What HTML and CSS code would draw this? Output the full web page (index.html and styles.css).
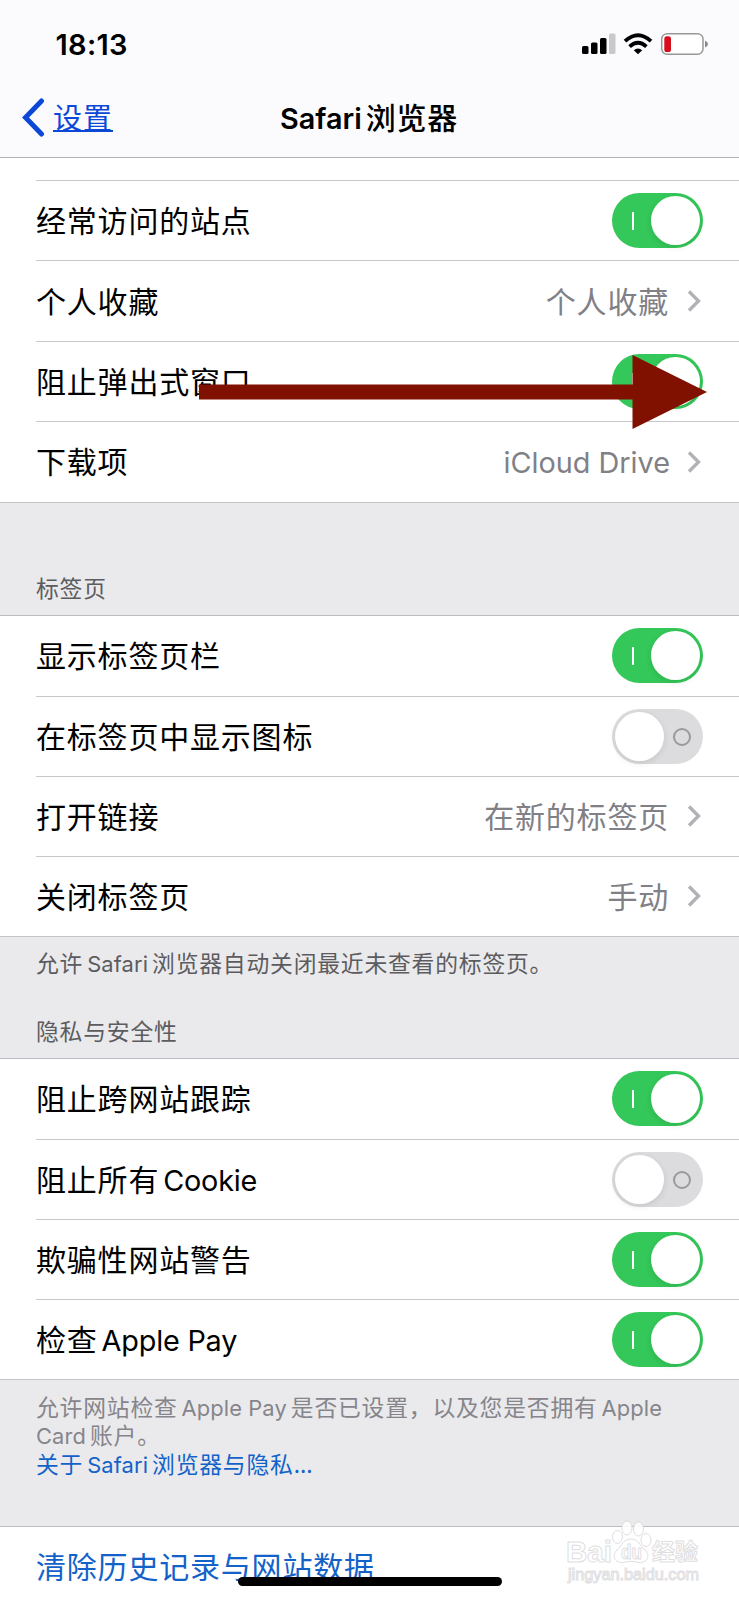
FILE: index.html
```html
<!DOCTYPE html>
<html lang="zh-CN">
<head>
    <meta charset="UTF-8">
    <meta name="viewport" content="width=device-width, initial-scale=1.0">
    <title>Safari浏览器</title>
    <link rel="stylesheet" href="styles.css">
</head>
<body>
    <div class="screen">
        <!-- Header -->
        <header class="header">
            <div class="status-bar">
                <span class="time">18:13</span>
                <svg class="status-icons" width="128" height="24" viewBox="0 0 128 24">
                    <rect x="1" y="14" width="6.5" height="8" rx="1.5"/>
                    <rect x="10" y="10.5" width="6.5" height="11.5" rx="1.5"/>
                    <rect x="19" y="6" width="6.5" height="16" rx="1.5"/>
                    <rect x="28" y="1.5" width="6.5" height="20.5" rx="1.5" fill="#c9c9cb"/>
                    <g fill="none" stroke="#000" stroke-width="3.8">
                        <path d="M44 9.2 Q57 -2.8 70 9.2"/>
                        <path d="M48.6 14.6 Q57 7 65.4 14.6"/>
                    </g>
                    <path d="M52.8 18.3 Q57 14.9 61.2 18.3 L57 22.3 Z"/>
                    <rect x="80.7" y="1.7" width="41.3" height="20.6" rx="5.5" fill="#fff" stroke="#98989a" stroke-width="1.5"/>
                    <rect x="83.3" y="4.3" width="6.7" height="15.7" rx="2.6" fill="#d70f1c"/>
                    <path d="M124 8.5 Q127 10 127 12 Q127 14 124 15.5 Z" fill="#88888a"/>
                </svg>
            </div>
            <nav class="navbar">
                <a class="back" href="#">
                    <svg width="24" height="40" viewBox="0 0 24 40"><path d="M20.5 3 L4.5 19.5 L20.5 36" fill="none" stroke="#0b48d8" stroke-width="5" stroke-linecap="round" stroke-linejoin="miter"/></svg>
                    <span>设置</span>
                </a>
                <h1 class="title"><span class="en">Safari</span>浏览器</h1>
            </nav>
        </header>

        <!-- General -->
        <ul class="list list-first">
            <li class="row"><span>经常访问的站点</span><i class="toggle on"></i></li>
            <li class="row"><span>个人收藏</span><span class="value">个人收藏<svg class="chevron" viewBox="0 0 14 24"><path d="M2 2.5 L11.5 12 L2 21.5"/></svg></span></li>
            <li class="row">
                <span>阻止弹出式窗口</span><i class="toggle on"></i>
                <svg class="arrow" width="508" height="76" viewBox="0 0 508 76"><path d="M0 30.5 H433.5 V1 L508 38 L433.5 75 V45.5 H0 Z" fill="#801000"/></svg>
            </li>
            <li class="row"><span>下载项</span><span class="value"><span class="en drive">iCloud Drive</span><svg class="chevron" viewBox="0 0 14 24"><path d="M2 2.5 L11.5 12 L2 21.5"/></svg></span></li>
        </ul>

        <!-- Tabs -->
        <h2 class="label label-tabs">标签页</h2>
        <ul class="list list-tabs">
            <li class="row"><span>显示标签页栏</span><i class="toggle on"></i></li>
            <li class="row"><span>在标签页中显示图标</span><i class="toggle"></i></li>
            <li class="row"><span>打开链接</span><span class="value">在新的标签页<svg class="chevron" viewBox="0 0 14 24"><path d="M2 2.5 L11.5 12 L2 21.5"/></svg></span></li>
            <li class="row"><span>关闭标签页</span><span class="value">手动<svg class="chevron" viewBox="0 0 14 24"><path d="M2 2.5 L11.5 12 L2 21.5"/></svg></span></li>
        </ul>

        <!-- Privacy -->
        <div class="label label-privacy">
            <p>允许<span class="en">Safari</span>浏览器自动关闭最近未查看的标签页。</p>
            <h2>隐私与安全性</h2>
        </div>
        <ul class="list list-privacy">
            <li class="row"><span>阻止跨网站跟踪</span><i class="toggle on"></i></li>
            <li class="row"><span>阻止所有<span class="en">Cookie</span></span><i class="toggle"></i></li>
            <li class="row"><span>欺骗性网站警告</span><i class="toggle on"></i></li>
            <li class="row"><span>检查<span class="en">Apple Pay</span></span><i class="toggle on"></i></li>
        </ul>
        <div class="note">
            <p>允许网站检查<span class="en">Apple Pay</span>是否已设置，以及您是否拥有<span class="en">Apple</span></p>
            <p><span class="en first">Card</span>账户。</p>
            <p><a href="#">关于<span class="en">Safari</span>浏览器与隐私<span class="dots">...</span></a></p>
        </div>

        <ul class="list list-last">
            <li class="row"><a href="#">清除历史记录与网站数据</a></li>
        </ul>

        <div class="home-indicator"></div>

        <!-- Watermark -->
        <svg class="watermark" width="140" height="70" viewBox="0 0 140 70">
            <g fill="#fff" stroke="#dcdcde" stroke-width="1">
                <text x="5" y="43" class="wm-logo" textLength="46" lengthAdjust="spacingAndGlyphs">Bai</text>
                <ellipse cx="56.5" cy="18" rx="5" ry="6.5"/>
                <ellipse cx="66" cy="9" rx="5" ry="7"/>
                <ellipse cx="77.5" cy="10" rx="5" ry="7"/>
                <ellipse cx="85" cy="21" rx="5" ry="6.5"/>
                <path d="M70 20 C62 20 61 27 56 31 C50 37 54 44 62 43.5 C67 42 73 42 78 43.5 C86 44 90 37 84 31 C79 27 78 20 70 20 Z"/>
                <text x="60" y="40" class="wm-du" textLength="21" lengthAdjust="spacingAndGlyphs">du</text>
                <text x="91" y="41" class="wm-cn">经验</text>
                <text x="7" y="61" class="wm-url" textLength="131" lengthAdjust="spacingAndGlyphs">jingyan.baidu.com</text>
            </g>
        </svg>
    </div>
</body>
</html>
```
FILE: styles.css
```css
*, *::before, *::after {
    box-sizing: border-box;
}
body {
    font-family: "Noto Sans CJK SC", sans-serif;
    margin: 0;
    padding: 0;
    background-color: #eaeaec;
    color: #000;
}
h1, h2, p, ul {
    margin: 0;
    padding: 0;
    font-weight: 400;
}
a {
    color: #1262c9;
    text-decoration: none;
}
.screen {
    position: relative;
    height: 1600px;
    overflow: hidden;
}
.en {
    font-family: Inter, sans-serif;
    font-size: 0.96em;
    line-height: 0;
    letter-spacing: -0.2px;
    margin: 0 4px;
}

/* Header */
.header {
    height: 158px;
    background-color: #fbfbfd;
    border-bottom: 1px solid #b0b0b3;
}
.status-bar {
    display: flex;
    justify-content: space-between;
    align-items: center;
    height: 88px;
    padding: 0 30px 0 55.5px;
}
.time {
    font-family: Inter, sans-serif;
    font-size: 29px;
    font-weight: 600;
    letter-spacing: 0.3px;
}
.navbar {
    display: grid;
    grid-template-columns: 259px auto;
    justify-content: start;
    align-items: center;
    height: 60px;
    padding-left: 21px;
}
.back {
    display: flex;
    align-items: center;
    gap: 8px;
    color: #0b48d8;
    font-size: 29px;
    letter-spacing: 1px;
}
.back span {
    margin-top: -4px;
    text-decoration: underline;
    text-decoration-thickness: 2px;
    text-underline-offset: 1px;
}
.title {
    margin-top: -5px;
    font-size: 30px;
    font-weight: 500;
    letter-spacing: 0.8px;
}
.title .en {
    font-weight: 600;
    letter-spacing: 0;
    margin-left: 0;
}

/* Lists */
.list {
    list-style: none;
    background-color: #fff;
    border-top: 1px solid #bcbcc0;
    border-bottom: 1px solid #c4c4c8;
    padding-left: 36px;
}
.list-first {
    border-top: 0;
    padding-top: 22px;
}
.list-first .row:first-child {
    border-top: 1px solid #c8c8ca;
}
.row {
    position: relative;
    display: flex;
    justify-content: space-between;
    align-items: center;
    height: 80.4px;
    padding-right: 36px;
    border-top: 1px solid #c8c8ca;
    font-size: 30px;
    letter-spacing: 0.8px;
}
.row > span, .row > a {
    margin-top: -3px;
}
.row:first-child {
    border-top: 0;
}
.list-tabs .row, .list-privacy .row {
    height: 80px;
}
.value {
    display: flex;
    align-items: center;
    color: #808086;
}
.drive {
    margin: 5px -1px 0 0;
    letter-spacing: 0;
}
.chevron {
    width: 14px;
    height: 24px;
    margin: 3px 2.5px 0 17.5px;
    fill: none;
    stroke: #b2b2b6;
    stroke-width: 3.4;
}
.toggle {
    position: relative;
    width: 91px;
    height: 55px;
    border-radius: 28px;
    background-color: #dcdcdf;
}
.toggle::before {
    content: "";
    position: absolute;
    top: 3px;
    left: 3px;
    width: 49px;
    height: 49px;
    border-radius: 50%;
    background-color: #fff;
    box-shadow: 0 2px 6px rgba(0, 0, 0, 0.1);
}
.toggle::after {
    content: "";
    position: absolute;
    top: 19px;
    right: 12px;
    width: 18px;
    height: 18px;
    border: 2px solid #9a9a9d;
    border-radius: 50%;
}
.toggle.on {
    background-color: #34c759;
}
.toggle.on::before {
    left: 39px;
}
.toggle.on::after {
    left: 20px;
    width: 2px;
    border: 0;
    border-radius: 0;
    background-color: #fff;
}
.arrow {
    position: absolute;
    left: 163px;
    top: 12px;
    z-index: 1;
}

/* Section labels */
.label, .note {
    padding-left: 36px;
    font-size: 22.8px;
    letter-spacing: 0.8px;
    color: #5c5c60;
}
.label .en, .note .en {
    letter-spacing: 0.1px;
}
.label h2 {
    font-size: 22.8px;
}
.label-tabs {
    height: 112px;
    padding-top: 68px;
    line-height: 34px;
}
.label-privacy {
    height: 121px;
    padding-top: 9px;
    line-height: 34px;
}
.label-privacy h2 {
    margin-top: 34px;
}
.note {
    height: 146px;
    padding-top: 13px;
    line-height: 28.5px;
    color: #85858b;
}
.note .first {
    margin-left: 0;
}
.note .dots {
    letter-spacing: 0;
}
.list-last {
    height: 80px;
    border-bottom: 0;
}

.home-indicator {
    position: absolute;
    left: 238px;
    top: 1577px;
    width: 264px;
    height: 9px;
    border-radius: 5px;
    background-color: #000;
}

/* Watermark */
.watermark {
    position: absolute;
    left: 561px;
    top: 1519px;
    opacity: 0.9;
}
.wm-logo {
    font: bold 30px "Liberation Sans", sans-serif;
}
.wm-du {
    font: bold 20px "Liberation Sans", sans-serif;
}
.wm-cn {
    font: bold 23px "Noto Sans CJK SC", sans-serif;
}
.wm-url {
    font: 16px "Liberation Sans", sans-serif;
}
```
